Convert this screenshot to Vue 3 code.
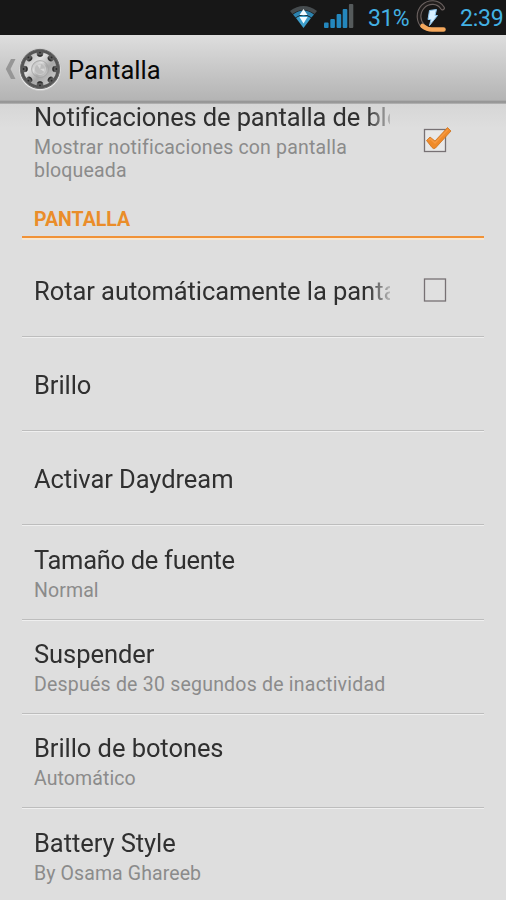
<script setup>
const rows = [
  { title: 'Rotar automáticamente la pantalla', check: true },
  { title: 'Brillo' },
  { title: 'Activar Daydream' },
  { title: 'Tamaño de fuente', summary: 'Normal' },
  { title: 'Suspender', summary: 'Después de 30 segundos de inactividad' },
  { title: 'Brillo de botones', summary: 'Automático' },
  { title: 'Battery Style', summary: 'By Osama Ghareeb' },
]
const teeth = [0, 45, 90, 135, 180, 225, 270, 315]
</script>

<template>
  <div class="screen">
    <header class="status">
      <svg class="wifi" width="29" height="25" viewBox="0 0 29 25">
        <path d="M1 7Q14.500 -3 28 7L25.500 10Q14.500 2 3.500 10Z" fill="#454b4e" />
        <path d="M4 10.500Q14.500 2.500 25 10.500L22.500 13.500Q14.500 7.500 6.500 13.500Z" fill="#2c83b0" />
        <path d="M7 14Q14.500 8.500 22 14L14.500 24Z" fill="#3d9ecb" />
        <path d="M14.500 5L18.500 11H10.500ZM10.500 13H18.500L14.500 19.500Z" fill="#f2fbff" />
      </svg>
      <svg class="signal" width="31" height="26" viewBox="0 0 31 26">
        <g fill="#2487bd">
          <rect x="1" y="19.500" width="4.600" height="5.500" rx="1" />
          <rect x="7.300" y="16" width="4.600" height="9" rx="1" />
          <rect x="13.600" y="11" width="4.600" height="14" rx="1" />
          <rect x="19.700" y="6" width="4.600" height="19" rx="1" />
        </g>
        <rect x="25.900" y="1" width="4.400" height="24" rx="1" fill="#555a5b" />
      </svg>
      <span class="percent">31%</span>
      <svg class="battery" width="34" height="34" viewBox="0 0 34 34">
        <path d="M28.500 9C24 2 14.500 2 9 7.500C3 14 4.500 23 9 27" fill="none" stroke="#6b6260" stroke-width="4.800" stroke-linecap="round" />
        <path d="M28.500 9C24 2 14.500 2 9 7.500C3 14 4.500 23 9 27" fill="none" stroke="#211e1d" stroke-width="2.600" stroke-linecap="round" />
        <path d="M8.500 27Q13 30.500 18 30.500H29.500" fill="none" stroke="#f5a85c" stroke-width="4.600" stroke-linecap="round" />
        <path d="M15.500 11.500L22.500 10.500L21 16.500H23.500L15.500 26.500L17 20.500H14Z" fill="#d7efff" stroke="#8cc3ea" stroke-width="1" />
      </svg>
      <span class="clock">2:39</span>
    </header>

    <div class="bar">
      <svg class="back" width="12" height="24" viewBox="0 0 12 24">
        <path d="M6 2H10.500L5.500 12L10.500 22H6L.8 12Z" fill="#969696" />
      </svg>
      <svg class="gear" width="44" height="44" viewBox="0 0 44 44">
        <defs>
          <linearGradient id="metal" x1="0" y1="0" x2="1" y2="1">
            <stop offset="0" stop-color="#a9a9a9" />
            <stop offset=".35" stop-color="#e0e0e0" />
            <stop offset=".6" stop-color="#a8a8a8" />
            <stop offset="1" stop-color="#d8d8d8" />
          </linearGradient>
        </defs>
        <circle cx="22" cy="22.500" r="21" fill="#ededed" stroke="#c4c4c4" stroke-width=".7" />
        <circle cx="22" cy="22" r="19.600" fill="#555" stroke="#6a6a6a" />
        <circle cx="22" cy="22" r="16.500" fill="url(#metal)" />
        <g v-for="t in teeth" :key="t" :transform="`rotate(${t} 22 22)`">
          <circle cx="22" cy="6.500" r="3.300" fill="#5a5a5a" />
          <circle cx="22" cy="5.600" r=".9" fill="#2a2a2a" />
          <path d="M19.800 8Q22 10 24.200 8" fill="none" stroke="#303030" stroke-width="1.200" />
        </g>
        <circle cx="22" cy="22" r="8.400" fill="url(#metal)" stroke="#a0a0a0" stroke-width=".8" />
        <circle cx="22" cy="22" r="5.600" fill="#bcbcbc" stroke="#d0d0d0" stroke-width=".8" />
        <path d="M22 22L19 17.500H23ZM22 22L26.500 21.500V25Z" fill="#d8d8d8" />
      </svg>
      <h1>Pantalla</h1>
    </div>

    <main>
      <section class="row first">
        <div class="words">
          <div class="title"><span>Notificaciones de pantalla de bloqueo</span></div>
          <div class="summary">Mostrar notificaciones con pantalla bloqueada</div>
        </div>
        <svg class="box" width="36" height="32" viewBox="0 0 36 32">
          <rect x="4.500" y="7.500" width="21" height="22" fill="#e8e8e8" stroke="#777174" stroke-width="1.300" />
          <path d="M6.500 18.500L10 15L15 19L27.500 5.500L31 9L15.500 26Q13.500 27.500 12 25.500Z" fill="#ef8a29" stroke="#cb721f" stroke-width=".8" stroke-linejoin="round" />
          <path d="M8.500 18L10.500 17L15 21L28 7.500" fill="none" stroke="#f69a42" stroke-width="1.500" />
        </svg>
      </section>
      <h2>PANTALLA</h2>
      <section v-for="(r, i) in rows" :key="r.title" class="row" :class="'r' + i">
        <div class="words">
          <div class="title"><span>{{ r.title }}</span></div>
          <div v-if="r.summary" class="summary">{{ r.summary }}</div>
        </div>
        <svg v-if="r.check" class="box" width="36" height="32" viewBox="0 0 36 32">
          <rect x="4.500" y="5" width="21" height="22" fill="#e0e0e0" stroke="#777174" stroke-width="1.300" />
        </svg>
      </section>
    </main>
  </div>
</template>

<style>
body { background: #dedede; overflow: hidden; }
</style>

<style scoped>
.screen { width: 506px; height: 900px; overflow: hidden; background: #dedede; font-family: Roboto, "Liberation Sans", sans-serif; display: flex; flex-direction: column; }
.status { height: 35px; flex: none; background: #171717; display: flex; align-items: center; justify-content: flex-end; color: #43b1e4; font-size: 23px; line-height: 35px; white-space: nowrap; box-sizing: border-box; padding-right: 3px; }
.wifi { margin: 0 5px 3px 0; }
.signal { margin: 0 14px 3px 0; }
.percent { width: 43px; padding-top: 2px; letter-spacing: -.5px; }
.battery { margin: 0 12px 3px 3px; }
.clock { width: 43px; padding-top: 2px; letter-spacing: -.2px; }
.bar { height: 69px; flex: none; box-sizing: border-box; background: linear-gradient(#dedede, #b4b4b4 65px, #a0a0a0 66px, #8e8e8e 67px, #b9b9b9); display: flex; align-items: center; padding: 0 0 1px 5px; }
.back { margin-right: 1px; }
h1 { margin: 0 0 0 6px; font-size: 25.500px; font-weight: 400; line-height: 32px; color: #080808; padding-top: 1px; letter-spacing: .05px; }
main { flex: 1; min-height: 0; overflow: hidden; padding: 0 22px 0 22px; background: linear-gradient(#d6d6d6, #dedede 24px); }
.row { box-sizing: border-box; height: 94.200px; padding: 3px 24px 0 12px; display: flex; align-items: center; border-bottom: 1.500px solid #bdbdbd; box-shadow: 0 1px #efefef; }
.words { width: 356px; flex: none; }
.title { font-size: 25.500px; line-height: 31px; letter-spacing: -.06px; color: #303030; white-space: nowrap; overflow: hidden; -webkit-mask-image: linear-gradient(90deg, #000 334px, transparent 362px); mask-image: linear-gradient(90deg, #000 334px, transparent 362px); }
.summary { font-size: 19.500px; line-height: 23px; letter-spacing: .22px; color: #8b8b8b; padding-top: 3px; }
.box { flex: none; margin-left: 30px; }
.first { height: 98px; padding-top: 0; border: 0; box-shadow: none; align-items: flex-start; }
.first .title { margin-top: -2px; letter-spacing: -.13px; }
.first .summary { letter-spacing: .18px; }
.first .box { margin-top: 18px; }
h2 { margin: 0; height: 36px; box-sizing: border-box; padding: 6px 0 0 12px; border-bottom: 2px solid #f19237; box-shadow: 0 2px #f7e7d2; font-size: 19.500px; line-height: 24px; font-weight: 700; color: #ea8d29; }
.r0 { height: 99px; padding-top: 9px; }
.r0 .box { margin-top: -4px; }
.r3 .title { letter-spacing: -.3px; }
.r3 .summary, .r5 .summary, .r6 .summary { letter-spacing: .1px; }
</style>
